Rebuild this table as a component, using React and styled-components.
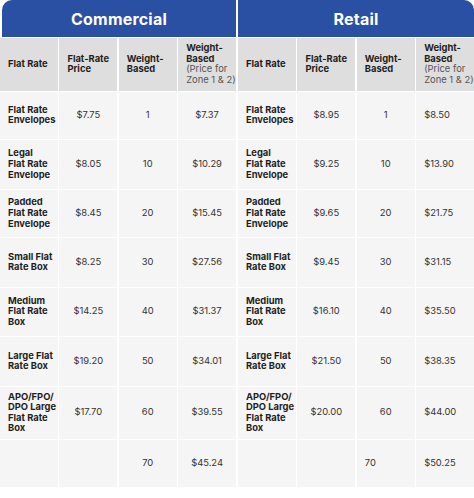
import React from 'react'
import styled, { createGlobalStyle } from 'styled-components'

const Global = createGlobalStyle`
  html, body { margin: 0; padding: 0; background: #ffffff; }
  body { font-family: Inter, "Noto Sans", sans-serif; color: #1f1f1f; }
`

const Wrap = styled.div`
  width: 474px;
  display: flex;
  gap: 2px;
  background: #ffffff;
`

const Panel = styled.div`
  flex: 1;
  min-width: 0;
  display: flex;
  flex-direction: column;
`

const Band = styled.div`
  height: 37px;
  margin-bottom: 1px;
  background: #2a50a3;
  color: #ffffff;
  display: flex;
  align-items: center;
  justify-content: center;
  font-size: 16px;
  font-weight: 700;
  letter-spacing: 0.2px;
  border-top-left-radius: ${p => (p.side === 'left' ? '10px' : '0')};
  border-top-right-radius: ${p => (p.side === 'right' ? '10px' : '0')};
  margin-left: ${p => (p.side === 'left' ? '2px' : '0')};
`

const Grid = styled.div`
  display: grid;
  grid-template-columns: repeat(4, minmax(0, 1fr));
  grid-template-rows: 52.5px 46.5px 48.5px 46.5px 48.5px 47.5px 48.5px 51.5px 46.5px;
  gap: 1.5px;
`

const HeadCell = styled.div`
  background: #dedede;
  display: flex;
  flex-direction: column;
  justify-content: center;
  padding: 0 0 0 8px;
  font-size: 9.4px;
  font-weight: 700;
  line-height: 10.6px;
  white-space: nowrap;
  color: #1e1e1e;
`

const Note = styled.span`
  font-weight: 400;
  color: #555555;
`

const Cell = styled.div`
  background: #f5f5f5;
  display: flex;
  align-items: center;
  justify-content: ${p => (p.left ? 'flex-start' : 'center')};
  padding: ${p => (p.left ? '0 0 0 8px' : '0')};
  font-size: 9.4px;
  line-height: 10.6px;
  white-space: nowrap;
  font-weight: ${p => (p.bold ? 700 : 400)};
  color: ${p => (p.bold ? '#1e1e1e' : '#333333')};
`

const names = [
  ['Flat Rate', 'Envelopes'],
  ['Legal', 'Flat Rate', 'Envelope'],
  ['Padded', 'Flat Rate', 'Envelope'],
  ['Small Flat', 'Rate Box'],
  ['Medium', 'Flat Rate', 'Box'],
  ['Large Flat', 'Rate Box'],
  ['APO/FPO/', 'DPO Large', 'Flat Rate', 'Box'],
  [],
]

const weights = ['1', '10', '20', '30', '40', '50', '60', '70']

const commercial = {
  flat: ['$7.75', '$8.05', '$8.45', '$8.25', '$14.25', '$19.20', '$17.70', ''],
  zone: ['$7.37', '$10.29', '$15.45', '$27.56', '$31.37', '$34.01', '$39.55', '$45.24'],
}

const retail = {
  flat: ['$8.95', '$9.25', '$9.65', '$9.45', '$16.10', '$21.50', '$20.00', ''],
  zone: ['$8.50', '$13.90', '$21.75', '$31.15', '$35.50', '$38.35', '$44.00', '$50.25'],
}

const Lines = ({ lines }) => (
  <div>
    {lines.map((l, i) => (
      <div key={i}>{l}</div>
    ))}
  </div>
)

const PriceTable = ({ title, side, data }) => (
  <Panel>
    <Band side={side}>{title}</Band>
    <Grid>
      <HeadCell>Flat Rate</HeadCell>
      <HeadCell>
        <div>Flat-Rate</div>
        <div>Price</div>
      </HeadCell>
      <HeadCell>
        <div>Weight-</div>
        <div>Based</div>
      </HeadCell>
      <HeadCell>
        <div>Weight-</div>
        <div>Based</div>
        <Note>(Price for</Note>
        <Note>Zone 1 &amp; 2)</Note>
      </HeadCell>
      {names.map((n, i) => (
        <React.Fragment key={i}>
          <Cell left bold>
            <Lines lines={n} />
          </Cell>
          <Cell>{data.flat[i]}</Cell>
          <Cell left={side === 'right' && i === 7}>{weights[i]}</Cell>
          <Cell left={side === 'right'}>{data.zone[i]}</Cell>
        </React.Fragment>
      ))}
    </Grid>
  </Panel>
)

export default function App() {
  return (
    <>
      <Global />
      <Wrap>
        <PriceTable title="Commercial" side="left" data={commercial} />
        <PriceTable title="Retail" side="right" data={retail} />
      </Wrap>
    </>
  )
}
